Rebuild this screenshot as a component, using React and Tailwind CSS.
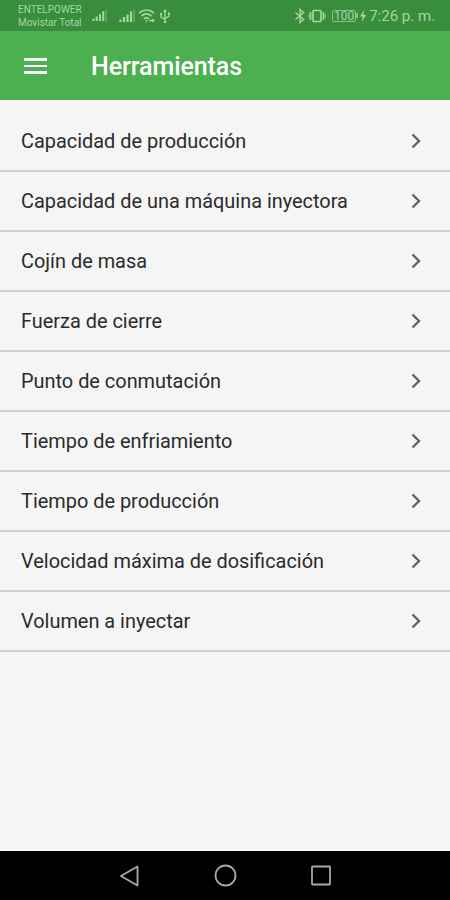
const TOOLS = [
  'Capacidad de producción',
  'Capacidad de una máquina inyectora',
  'Cojín de masa',
  'Fuerza de cierre',
  'Punto de conmutación',
  'Tiempo de enfriamiento',
  'Tiempo de producción',
  'Velocidad máxima de dosificación',
  'Volumen a inyectar',
];

const SignalIcon = ({ className }) => (
  <svg viewBox="0 0 16 14" className={className} fill="none" stroke="currentColor" strokeWidth="2.2">
    <path d="M1.5 13v-2.5M5 13V8M8.5 13V5.5M12 13V2.5" />
    <path d="M15 13V0.5" strokeWidth="1.2" opacity="0.6" />
  </svg>
);

const WifiIcon = () => (
  <svg viewBox="0 0 18 16" className="ml-[3px] h-4 w-[18px]" fill="none" stroke="currentColor" strokeWidth="1.7">
    <path d="M1 5C5.5 1 11.5 1 16 5M3.5 8c3-2.5 7-2.5 10 0M6 10.8c1.5-1.2 3.5-1.2 5 0" />
    <path d="M8.5 12v2M11 12.5h5M14.5 11l1.5 1.5-1.5 1.5" strokeWidth="1.3" />
  </svg>
);

const UsbIcon = () => (
  <svg viewBox="0 0 12 16" className="ml-[3px] h-4 w-3" fill="none" stroke="currentColor" strokeWidth="1.4">
    <path d="M6 2v12M2 6v3l4 2.5M10 5v3L6 10.5" />
    <path d="M4 4l2-3 2 3zM4.8 13h2.4v2H4.8zM1 5h2v2H1zM9 4.5h2v2H9z" fill="currentColor" stroke="none" />
  </svg>
);

const BluetoothIcon = () => (
  <svg viewBox="0 0 12 16" className="h-4 w-3" fill="none" stroke="currentColor" strokeWidth="1.5">
    <path d="M1.5 4.5l8 7L6 14.5v-13l3.5 3-8 7" />
  </svg>
);

const VibrateIcon = () => (
  <svg viewBox="0 0 18 16" className="ml-0.5 h-4 w-[18px]" fill="none" stroke="currentColor" strokeWidth="1.7">
    <rect x="5" y="2.5" width="8" height="11" rx="1" />
    <path d="M2.5 4v8M15.5 4v8" />
    <path d="M0.7 6v4M17.3 6v4" strokeWidth="1" opacity="0.7" />
  </svg>
);

const StatusBar = () => (
  <div className="flex h-[31px] shrink-0 items-center bg-[#388e3c] pr-[15px] pl-[18px] text-[#a2d6a4]">
    <div className="w-[74px] text-[10px] leading-[13px] whitespace-nowrap">
      <p>ENTELPOWER</p>
      <p>Movistar Total</p>
    </div>
    <SignalIcon className="h-[13px] w-[15px]" />
    <SignalIcon className="ml-3 h-[14px] w-4" />
    <WifiIcon />
    <UsbIcon />
    <div className="ml-auto flex items-center">
      <BluetoothIcon />
      <VibrateIcon />
      <div className="ml-1.5 flex h-3 w-6 items-center justify-center rounded-[2px] border border-[#83c486] text-[12px] leading-none">
        100
      </div>
      <div className="h-[5px] w-0.5 bg-[#83c486]" />
      <svg viewBox="0 0 6 12" className="ml-0.5 h-3 w-1.5" fill="currentColor">
        <path d="M4 0L0 6.5h2.5L2 12l4-7H3.4z" />
      </svg>
      <span className="ml-[3px] pt-0.5 text-[15px] leading-none whitespace-nowrap">7:26 p. m.</span>
    </div>
  </div>
);

const AppBar = () => (
  <header className="flex h-[69px] shrink-0 items-center bg-[#4caf50] pt-px pl-6 text-white">
    <button aria-label="Menú" className="flex w-[23px] flex-col gap-[4px]">
      <span className="h-[2.5px] bg-white" />
      <span className="h-[2.5px] bg-white" />
      <span className="h-[2.5px] bg-white" />
    </button>
    <h1 className="ml-11 pt-px text-[25px] leading-none font-medium tracking-[-0.08px]">Herramientas</h1>
  </header>
);

const ToolRow = ({ name }) => (
  <li className="flex h-[60px] items-center justify-between border-b-2 border-[#d1d1d1] pr-[29px] pl-[21px]">
    <span className="pt-px text-[19.92px] leading-[21px] text-[#2b2b2b]">{name}</span>
    <svg viewBox="0 0 10 16" className="h-4 w-2.5" fill="none" stroke="#626262" strokeWidth="2.4">
      <path d="M1.5 1.5L8 8l-6.5 6.5" />
    </svg>
  </li>
);

const NavBar = () => (
  <nav className="flex h-[49px] shrink-0 items-center justify-center gap-[72px] bg-black text-[#a8a8a8]">
    <svg viewBox="0 0 24 24" className="h-6 w-6" fill="none" stroke="currentColor" strokeWidth="1.8" strokeLinejoin="round">
      <path d="M20.5 2.5v19L4 12z" />
    </svg>
    <svg viewBox="0 0 24 24" className="h-6 w-6" fill="none" stroke="currentColor" strokeWidth="1.8">
      <circle cx="12.5" cy="11.5" r="10" />
    </svg>
    <svg viewBox="0 0 24 24" className="h-6 w-6" fill="none" stroke="currentColor" strokeWidth="1.8">
      <rect x="3" y="2.5" width="18" height="18" rx="0.5" />
    </svg>
  </nav>
);

const App = () => (
  <div className="flex h-[900px] w-[450px] flex-col overflow-hidden bg-[#f5f5f5] font-['Roboto',sans-serif]">
    <StatusBar />
    <AppBar />
    <ul className="flex-1 pt-3">
      {TOOLS.map((name) => (
        <ToolRow key={name} name={name} />
      ))}
    </ul>
    <NavBar />
  </div>
);

export default App;
